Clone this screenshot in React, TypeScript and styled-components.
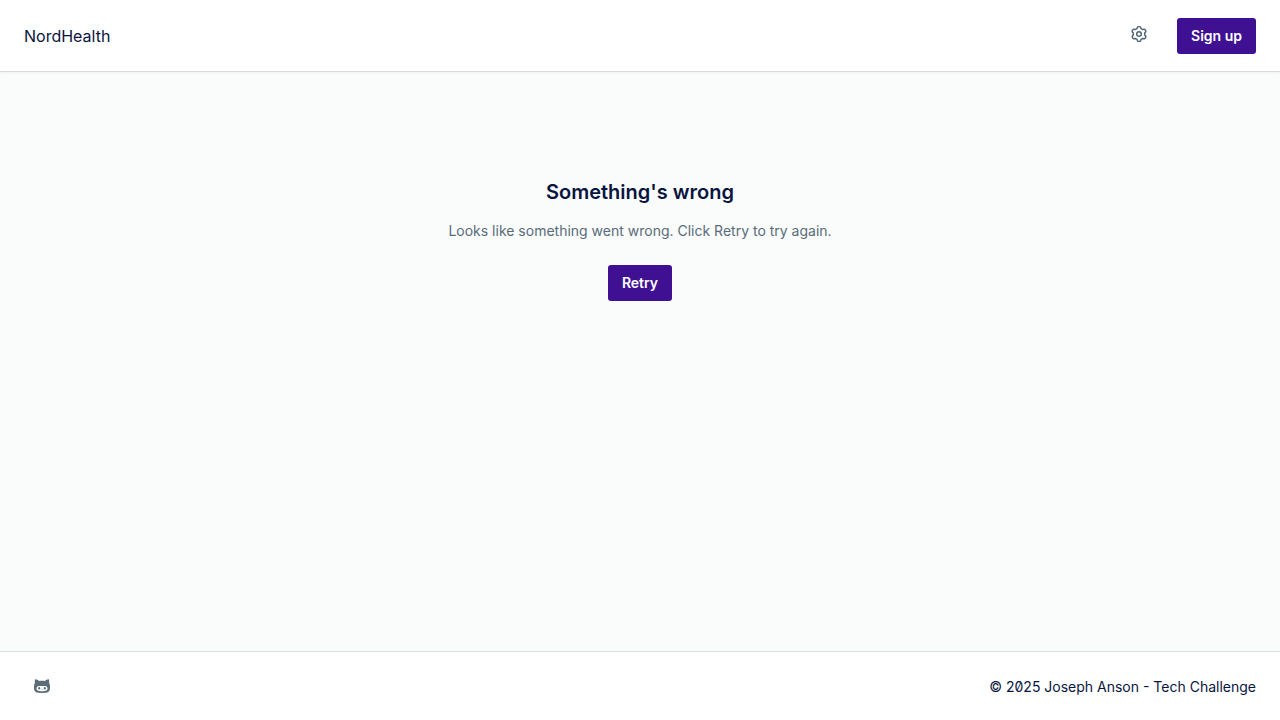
import React from 'react';
import styled, { createGlobalStyle } from 'styled-components';

const GlobalStyle = createGlobalStyle`
  *, *::before, *::after { box-sizing: border-box; }
  body {
    margin: 0;
    background: #fafcfc;
    color: #091540;
    font-family: Inter, "Liberation Sans", sans-serif;
    font-size: 14px;
    line-height: 20px;
    font-feature-settings: "zero";
    -webkit-font-smoothing: antialiased;
  }
`;

const Page = styled.div`
  min-height: 100vh;
  display: flex;
  flex-direction: column;
`;

const Bar = styled.div`
  display: flex;
  align-items: center;
  justify-content: space-between;
  padding: 0 24px;
  background: #fff;
`;

const Header = styled(Bar).attrs({ as: 'header' })`
  min-height: 72px;
  border-bottom: 1px solid #d8dde2;
  box-shadow: 0 1px 3px rgba(12, 26, 62, 0.05);
`;

const Footer = styled(Bar).attrs({ as: 'footer' })`
  min-height: 69px;
  padding-top: 2px;
  border-top: 1px solid #d8dfe2;
`;

const Brand = styled.a`
  color: inherit;
  font-size: 16px;
  line-height: 24px;
  text-decoration: none;
`;

const Actions = styled.div`
  display: flex;
  align-items: center;
  gap: 20px;
`;

const IconButton = styled.button`
  display: flex;
  align-items: center;
  justify-content: center;
  width: 36px;
  height: 36px;
  padding: 0 0 4px;
  border: 0;
  background: transparent;
  color: #53677a;
`;

const IconLink = styled.a`
  display: flex;
  align-items: center;
  justify-content: center;
  width: 36px;
  height: 36px;
  padding-bottom: 2px;
  color: #5a6d79;
`;

const Button = styled.button`
  height: 36px;
  padding: 0 14px;
  border: 0;
  border-radius: 3px;
  background: #401092;
  color: #fff;
  font: inherit;
  font-weight: 600;
`;

const Main = styled.main`
  flex: 1;
  display: flex;
  flex-direction: column;
  align-items: center;
  padding: 104px 24px 24px;
  text-align: center;
`;

const Title = styled.h1`
  margin: 0;
  font-size: 20px;
  line-height: 32px;
  font-weight: 600;
`;

const Message = styled.p`
  margin: 13px 0 24px;
  color: #596b78;
`;

const GearIcon = () => (
  <svg width="16" height="16" viewBox="0 0 14 14" fill="none" stroke="currentColor" strokeWidth="1.3" strokeLinejoin="round" aria-hidden="true">
    <path d="M5.23 2.25l.43-1.11A1 1 0 0 1 6.59.5h.82a1 1 0 0 1 .93.64l.43 1.11 1.46.84 1.18-.18a1 1 0 0 1 1 .49l.4.7a1 1 0 0 1-.08 1.13L12 6.16v1.68l.75.93a1 1 0 0 1 .08 1.13l-.4.7a1 1 0 0 1-1 .49l-1.18-.18-1.46.84-.43 1.11a1 1 0 0 1-.93.64h-.82a1 1 0 0 1-.93-.64l-.43-1.11-1.46-.84-1.18.18a1 1 0 0 1-1-.49l-.4-.7a1 1 0 0 1 .08-1.13L2 7.84V6.16l-.75-.93a1 1 0 0 1-.08-1.13l.4-.7a1 1 0 0 1 1-.49l1.18.18z" />
    <circle cx="7" cy="7" r="2" />
  </svg>
);

const GitHubIcon = () => (
  <svg width="16" height="16" viewBox="0 0 16 16" fill="currentColor" aria-hidden="true">
    <path fillRule="evenodd" d="M1.2 1.2C2.500 1 4 1.900 5 3c1.900-.3 4.100-.3 6 0 1-1.100 2.500-2 3.800-1.800.5 1.200.6 2.600.3 3.800.6.9.9 2 .9 3.300v2c0 3-1.700 4.400-4.500 4.500a80 80 0 0 1-7 0C1.700 14.700 0 13.300 0 10.300v-2C0 7 .3 5.900.9 5 .6 3.800.7 2.400 1.200 1.200zM5 8C3.300 8 2.500 9 2.500 10.500c0 2 1.500 2.700 5.500 2.700s5.500-.7 5.500-2.700C13.500 9 12.700 8 11 8z" />
    <ellipse cx="5.200" cy="10.300" rx="1" ry="1.200" />
    <ellipse cx="10.800" cy="10.300" rx="1" ry="1.200" />
    <path d="M7.200 11.200h1.600L8 12z" />
  </svg>
);

export default function App() {
  return (
    <>
      <GlobalStyle />
      <Page>
        <Header>
          <Brand href="#">NordHealth</Brand>
          <Actions>
            <IconButton type="button" aria-label="Settings">
              <GearIcon />
            </IconButton>
            <Button type="button">Sign up</Button>
          </Actions>
        </Header>
        <Main>
          <Title>Something's wrong</Title>
          <Message>Looks like something went wrong. Click Retry to try again.</Message>
          <Button type="button">Retry</Button>
        </Main>
        <Footer>
          <IconLink href="#" aria-label="GitHub">
            <GitHubIcon />
          </IconLink>
          <span>© 2025 Joseph Anson - Tech Challenge</span>
        </Footer>
      </Page>
    </>
  );
}
